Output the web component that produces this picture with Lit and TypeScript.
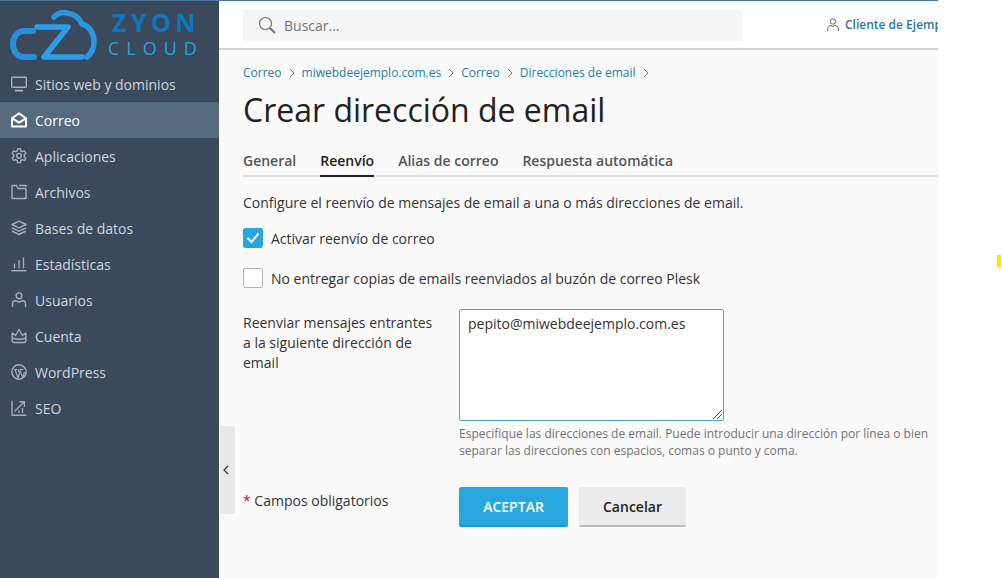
import { LitElement, html, css, svg } from "lit";
import { customElement } from "lit/decorators.js";

const ic = (body: unknown) => html`<svg class="ico" viewBox="0 0 16 16" fill="none" stroke="currentColor" stroke-width="1.4" stroke-linejoin="round">${body}</svg>`;

const items: [string, unknown, boolean?][] = [
  ["Sitios web y dominios", ic(svg`<rect x="0.7" y="1.2" width="14.6" height="10" rx=".6"/><path d="M4 14.6h8" stroke-width="1.8"/>`)],
  ["Correo", ic(svg`<path d="M1 6.2 8 1.4l7 4.8v8.2H1z" stroke-width="2"/><path d="M1.4 6.6 8 10.6l6.6-4" stroke-width="2"/>`), true],
  ["Aplicaciones", ic(svg`<path d="M6.6.8h2.800l.4 2 1.600.9 2-.7 1.400 2.400-1.500 1.400v1.800l1.500 1.400-1.400 2.400-2-.7-1.600.9-.4 2H6.600l-.4-2-1.600-.9-2 .7-1.400-2.400 1.500-1.400V6.800L1.200 5.400l1.400-2.400 2 .7 1.600-.9z"/><circle cx="8" cy="7.800" r="2.400"/>`)],
  ["Archivos", ic(svg`<path d="M1 14.500V1.500h4.500l1.500 3H15v10z"/><path d="M8 1.500h7v1.500"/>`)],
  ["Bases de datos", ic(svg`<path d="M8 1.200 15 4.500 8 7.800 1 4.500z"/><path d="M1 7.800l7 3.300 7-3.300M1 11l7 3.500 7-3.500"/>`)],
  ["Estadísticas", ic(svg`<path d="M.5 14.700h15" stroke-width="1.400"/><path d="M3.500 12.500V7.500M8 12.500V4M12.500 12.500V1.500" stroke-width="1.300"/>`)],
  ["Usuarios", ic(svg`<circle cx="8" cy="3.800" r="2.900"/><path d="M1.500 15v-3.500C1.500 9.500 3.500 8.800 5 8.800l3 1.200 3-1.200c1.500 0 3.500.7 3.500 2.700V15"/>`)],
  ["Cuenta", ic(svg`<path d="M1.200 5 4.500 7.500 8 1.500l3.500 6 3.300-2.500V13a1.500 1.500 0 0 1-1.500 1.500H2.700A1.500 1.500 0 0 1 1.200 13z"/><path d="M1.200 10c4 1.500 9.600 1.500 13.600 0"/>`)],
  ["WordPress", ic(svg`<circle cx="8" cy="8" r="7.200"/><path d="M3 5.500h3.500M9 5.500h3.500M4 5.500l3 8.500 1.500-5L7 5.500M8.700 5.500l3 8 1.800-5.500" stroke-width="1.100"/>`)],
  ["SEO", ic(svg`<path d="M1 .8v14.400h14.400"/><path d="M3.500 11.500 13 2M8.500 1.800H13.400V6.800" stroke-width="1.400"/><path d="M8 13v-2.500M11.500 13V8" stroke-width="1.300"/>`)],
];

const crumbs = ["Correo", "miwebdeejemplo.com.es", "Correo", "Direcciones de email"];
const chev = html`<svg class="chev" viewBox="0 0 6 10" fill="none" stroke="#777" stroke-width="1"><path d="M1 1l4 4-4 4"/></svg>`;

@customElement("app-root")
export class AppRoot extends LitElement {
  static styles = css`
    :host { display: block; width: 1002px; height: 578px; overflow: hidden; background: #fff; position: relative;
      font-family: "Open Sans", "Noto Sans", sans-serif; font-size: 14px; color: #222; }
    .page { display: flex; height: 578px; width: 938px; }
    .side { width: 219px; flex: none; background: #3a4a5c; color: #cdd5de; }
    .brand { height: 66px; border-top: 1px solid #4a7799; box-sizing: border-box; display: flex; align-items: flex-start; padding: 9px 0 0 10px; gap: 11px; }
    .brand svg { width: 87px; height: 51px; flex: none; }
    .words { display: flex; flex-direction: column; align-items: flex-start; font-family: "Open Sans", sans-serif; padding-top: 1px; }
    .zy { font-size: 25px; font-weight: 700; letter-spacing: 4.4px; color: #0f75bd; line-height: 23px; height: 23px; margin-left: 4px; }
    .cl { font-size: 18px; font-weight: 400; letter-spacing: 7px; color: #29a0df; line-height: 18px; height: 18px; margin-top: 5px; }
    .nav { display: flex; flex-direction: column; }
    .item { height: 36px; display: flex; align-items: center; gap: 8px; padding-left: 11px; box-sizing: border-box; }
    .item.on { background: #566a7e; color: #fff; box-shadow: 0 -1px 0 #33424f; }
    .ico { width: 16px; height: 16px; flex: none; color: #a4afba; }
    .item.on .ico { color: #fff; }
    .main { flex: 1; min-width: 0; background: #fafafa; display: flex; flex-direction: column; }
    .top { height: 50px; flex: none; box-sizing: border-box; background: #fff; border-top: 1px solid #4a7799; border-bottom: 2px solid #d2d2d2;
      display: flex; align-items: center; padding-left: 24px; overflow: hidden; }
    .search { width: 499px; height: 31px; flex: none; margin-top: 1px; background: #f5f5f5; display: flex; align-items: center; gap: 8px; padding-left: 15px; box-sizing: border-box; color: #777; }
    .search svg { width: 18px; height: 18px; }
    .user { margin-left: 85px; display: flex; align-items: center; gap: 6px; flex: none; white-space: nowrap; font-size: 12px; font-weight: 600; color: #28799c; }
    .user svg { width: 12px; height: 13px; }
    .body { padding: 15px 0 0 24px; display: flex; flex-direction: column; }
    .crumbs { display: flex; align-items: center; font-size: 12px; line-height: 16px; color: #1f7fa8; height: 16px; gap: 7px; }
    .chev { width: 6px; height: 10px; }
    h1 { margin: 7px 0 0; font-size: 32px; font-weight: 400; line-height: 44px; color: #222; }
    .tabs { display: flex; gap: 24px; margin-top: 17px; border-bottom: 2px solid #e0e0e0; height: 28px; box-sizing: border-box; }
    .tab { font-weight: 600; color: #555; line-height: 24px; height: 28px; box-sizing: border-box; }
    .tab.on { color: #222; border-bottom: 2px solid #222; }
    .desc { margin: 16px 0 0; line-height: 20px; color: #333; }
    .chk { display: flex; align-items: center; gap: 8px; height: 20px; color: #333; }
    .chk.a { margin-top: 15px; }
    .chk.b { margin-top: 20px; }
    .box { width: 20px; height: 20px; box-sizing: border-box; border-radius: 2px; border: 1px solid #b5b5b5; background: #fff; display: flex; align-items: center; justify-content: center; }
    .box.on { background: #28a7de; border-color: #28a7de; }
    .box svg { width: 14px; height: 12px; }
    .row { display: flex; margin-top: 21px; }
    .lab { width: 216px; flex: none; line-height: 20px; color: #333; padding-top: 4px; box-sizing: border-box; }
    .field { width: 479px; flex: none; }
    .ta { width: 265px; height: 112px; box-sizing: border-box; background: #fff; border: 1px solid #54a8b8; border-radius: 2px; padding: 4px 8px; line-height: 20px; color: #333; position: relative; }
    .grip { position: absolute; right: 1px; bottom: 1px; width: 9px; height: 9px; }
    .help { font-size: 12px; line-height: 17px; color: #737373; margin: 4px 0 0; white-space: nowrap; }
    .foot { display: flex; margin-top: 28px; }
    .req { width: 216px; flex: none; padding-top: 4px; line-height: 20px; color: #333; box-sizing: border-box; }
    .req b { color: #b5173f; font-weight: 400; }
    .btns { display: flex; gap: 11px; }
    .btn { height: 40px; display: flex; align-items: center; justify-content: center; box-sizing: border-box; border-radius: 2px; font-weight: 600; }
    .ok { width: 109px; background: #28a7de; color: #fff; border-bottom: 2px solid #2196c9; }
    .no { width: 107px; background: #ececec; color: #222; border-bottom: 2px solid #bbb; }
    .handle { position: absolute; left: 220px; top: 426px; width: 15px; height: 88px; background: #e9e9e9; border-radius: 0 3px 3px 0; display: flex; align-items: center; justify-content: center; padding-right: 3px; box-sizing: border-box; }
    .handle svg { width: 6px; height: 10px; }
    .mark { position: absolute; left: 997px; top: 255px; width: 4px; height: 12px; background: #ffe600; }
  `;

  render() {
    return html`
      <div class="page">
        <aside class="side">
          <div class="brand">
            <svg viewBox="0 0 87 51" fill="none" stroke-linecap="round" stroke-linejoin="round">
              <path d="M23 21H13C6 22 3 28 3 34c0 8 5 13 11 13h10" stroke="#2a8fdb" stroke-width="6"/>
              <path d="M44 7c4-4 9-5 13-4 8 1 13 6 15 11 8 2 12 10 12 18 0 7-3 12-7 15" stroke="#2a96e0" stroke-width="5.500"/>
              <path d="M27 17h31L34 47h38" stroke="#2b9fe6" stroke-width="5.500"/>
            </svg>
            <div class="words"><span class="zy">ZYON</span><span class="cl">CLOUD</span></div>
          </div>
          <nav class="nav">
            ${items.map(([t, i, on]) => html`<div class="item ${on ? "on" : ""}">${i}<span>${t}</span></div>`)}
          </nav>
        </aside>
        <main class="main">
          <header class="top">
            <div class="search">
              <svg viewBox="0 0 18 18" fill="none" stroke="#777" stroke-width="1.200"><circle cx="7.500" cy="7.500" r="6"/><path d="M12 12l5 5" stroke-width="2"/></svg>
              <span>Buscar...</span>
            </div>
            <div class="user">
              <svg viewBox="0 0 12 13" fill="none" stroke="#666" stroke-width="1"><circle cx="6" cy="3.500" r="2.700"/><path d="M.7 13v-2.500C.7 8.500 2.500 7.500 4 7.500L6 8.500l2-1c1.500 0 3.300 1 3.300 3V13"/></svg>
              <span>Cliente de Ejemplo</span>
            </div>
          </header>
          <div class="body">
            <div class="crumbs">
              ${crumbs.map((c) => html`<span>${c}</span>${chev}`)}
            </div>
            <h1>Crear dirección de email</h1>
            <div class="tabs">
              <div class="tab">General</div>
              <div class="tab on">Reenvío</div>
              <div class="tab">Alias de correo</div>
              <div class="tab">Respuesta automática</div>
            </div>
            <p class="desc">Configure el reenvío de mensajes de email a una o más direcciones de email.</p>
            <label class="chk a">
              <span class="box on"><svg viewBox="0 0 14 12" fill="none" stroke="#fff" stroke-width="2"><path d="M1.500 6l4 4L12.500 1.500"/></svg></span>
              <span>Activar reenvío de correo</span>
            </label>
            <label class="chk b">
              <span class="box"></span>
              <span>No entregar copias de emails reenviados al buzón de correo Plesk</span>
            </label>
            <div class="row">
              <div class="lab">Reenviar mensajes entrantes<br />a la siguiente dirección de<br />email</div>
              <div class="field">
                <div class="ta">pepito@miwebdeejemplo.com.es
                  <svg class="grip" viewBox="0 0 9 9" stroke="#555" stroke-width="1"><path d="M0 9l9-9M4 9l5-5"/></svg>
                </div>
                <p class="help">Especifique las direcciones de email. Puede introducir una dirección por línea o bien<br />separar las direcciones con espacios, comas o punto y coma.</p>
              </div>
            </div>
            <div class="foot">
              <div class="req"><b>*</b> Campos obligatorios</div>
              <div class="btns">
                <div class="btn ok">ACEPTAR</div>
                <div class="btn no">Cancelar</div>
              </div>
            </div>
          </div>
        </main>
      </div>
      <div class="handle"><svg viewBox="0 0 6 10" fill="none" stroke="#333" stroke-width="1.200"><path d="M5 1L1 5l4 4"/></svg></div>
      <div class="mark"></div>
    `;
  }
}
